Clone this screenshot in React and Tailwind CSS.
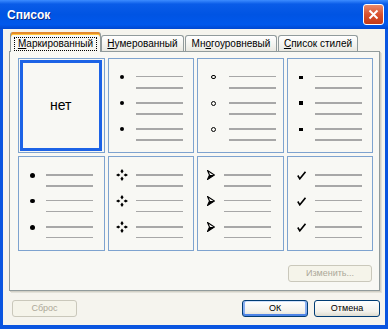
import React from "react";

const line = "bg-[#a7a7a7]";

function Lines({ thin = [] }) {
  return (
    <div className="flex w-[47px] flex-col gap-[9px]">
      <div className={`${line} ${thin[0] ? "h-[1px] mb-[1px]" : "h-[2px]"}`} />
      <div className={`${line} ${thin[1] ? "h-[1px] mb-[1px]" : "h-[2px]"}`} />
    </div>
  );
}

function Star() {
  return (
    <svg width="12" height="12" viewBox="0 0 12 12">
      <path d="M6 0 L7.6 2.3 L6 4.4 L4.4 2.3 Z M6 7.6 L7.6 9.7 L6 12 L4.4 9.7 Z M0 6 L2.3 4.4 L4.4 6 L2.3 7.6 Z M7.6 6 L9.7 4.4 L12 6 L9.7 7.6 Z" fill="#000" />
    </svg>
  );
}

function Arrow() {
  return (
    <svg width="8" height="10" viewBox="0 0 8 10">
      <path d="M0.5 0.5 L7.5 5 L0.5 9.5 L2.5 5 Z" fill="none" stroke="#000" strokeWidth="1.1" />
      <path d="M2.5 5 L7.5 5 L0.5 9.5 Z" fill="#000" />
    </svg>
  );
}

function Check() {
  return (
    <svg width="9" height="9" viewBox="0 0 9 9">
      <path d="M0.8 4.5 L2.8 7.8 L8.5 0.8" fill="none" stroke="#000" strokeWidth="1.6" />
    </svg>
  );
}

function Cell({ bullets, thin = [], offset = "w-[27px]" }) {
  return (
    <div className="h-[95px] border border-[#7ea3cf] bg-[#f8f8f4] pt-[17px]">
      <div className="flex flex-col gap-[13px]">
        {bullets.map((b, i) => (
          <div key={i} className="flex">
            <div className={`${offset} flex h-[2px] items-center justify-center`}>{b}</div>
            <Lines thin={thin[i] || []} />
          </div>
        ))}
      </div>
    </div>
  );
}

const dot = (s) => <div className={`${s} shrink-0 rounded-full bg-black`} />;
const ring = (s) => <div className={`${s} shrink-0 rounded-full border border-black`} />;
const sq = (s) => <div className={`${s} shrink-0 bg-black`} />;

function Tab({ w, children }) {
  return (
    <div
      className={`${w} flex h-[16px] items-center justify-center rounded-t-[3px] border-x border-t border-[#919b9c] bg-[linear-gradient(to_bottom,#ffffff,#f3f3ef_60%,#e9e8e1)] text-[10px] leading-none text-black`}
    >
      {children}
    </div>
  );
}

function Btn({ w, disabled, primary, children }) {
  return (
    <div
      className={`${w} flex h-[17px] items-center justify-center rounded-[3px] border text-[9px] leading-none ${
        disabled
          ? "border-[#cac8bb] bg-[#f5f4ea] text-[#aca899]"
          : "border-[#003c74] bg-[linear-gradient(to_bottom,#ffffff,#f2f1eb_70%,#dedcd0)] text-black"
      } ${
        primary
          ? "shadow-[inset_0_-2px_0_#4d84e6,inset_2px_0_0_#8ab0f2,inset_-2px_0_0_#8ab0f2,inset_0_1px_0_#cfe0fb]"
          : ""
      }`}
    >
      {children}
    </div>
  );
}

export default function App() {
  return (
    <div className="flex h-[329px] w-[388px] flex-col font-['Liberation_Sans',Arial,sans-serif]">
      <div className="flex h-[29px] shrink-0 items-center justify-between bg-[linear-gradient(to_bottom,#3d8cff_0%,#0a5ce8_14%,#0054e3_50%,#0058ec_85%,#0047d0_100%)] pl-[7px] pr-[4px]">
        <span className="text-[12px] font-bold text-white [text-shadow:1px_1px_0_#0b2e8c]">Список</span>
        <div className="flex h-[21px] w-[21px] items-center justify-center rounded-[3px] border border-white bg-[linear-gradient(to_bottom,#e98a6c,#d9512e_50%,#c33a18)]">
          <svg width="11" height="11" viewBox="0 0 11 11">
            <path d="M1.5 1.5 L9.5 9.5 M9.5 1.5 L1.5 9.5" stroke="#fff" strokeWidth="2" />
          </svg>
        </div>
      </div>

      <div className="flex flex-1 flex-col border-x-[3px] border-b-[4px] border-[#0a55e0] bg-[#f5f4ee] pl-[6px] pt-[3px]">
        <div className="relative z-10 flex h-[19px] items-end pl-[1px]">
          <div className="-mb-[1px] flex h-[20px] w-[91px] items-center justify-center rounded-t-[3px] border-x border-[#919b9c] bg-[#f8f8f4] pt-[3px] text-[10px] leading-none text-black shadow-[inset_0_2px_0_#e68b2c,inset_0_3px_0_#ffc73c]">
            <span className="border border-dotted border-black px-[3px] py-[1px]">
              <u>М</u>аркированный
            </span>
          </div>
          <Tab w="w-[83px]">
            <u>Н</u>умерованный
          </Tab>
          <div className="w-[1px]" />
          <Tab w="w-[92px]">
            Мн<u>о</u>гоуровневый
          </Tab>
          <div className="w-[1px]" />
          <Tab w="w-[80px]">
            <u>С</u>писок стилей
          </Tab>
        </div>

        <div className="flex h-[240px] w-[371px] flex-col border border-[#919b9c] bg-[#f8f8f4] pl-[8px] pt-[6px] shadow-[1px_1px_0_#d2d0c6,2px_2px_0_#e3e2da]">
          <div className="grid w-[355px] grid-cols-4 gap-x-[3px] gap-y-[3px]">
            <div className="h-[95px] border border-[#7ea3cf] bg-[#f8f8f4] p-[1px] pr-[2px]">
              <div className="flex h-full items-center justify-center border-[3px] border-[#1d63e6] text-[14px] text-black">
                нет
              </div>
            </div>
            <Cell bullets={[dot("h-[4px] w-[4px]"), dot("h-[4px] w-[4px]"), dot("h-[4px] w-[4px]")]} thin={[[true]]} />
            <Cell
              offset="w-[31px]"
              bullets={[ring("h-[4px] w-[5px]"), ring("h-[5px] w-[5px]"), ring("h-[5px] w-[5px]")]}
              thin={[[true]]}
            />
            <Cell
              bullets={[sq("h-[3px] w-[4px]"), sq("h-[4px] w-[4px]"), sq("h-[3px] w-[4px]")]}
              thin={[[true]]}
            />
            <Cell
              bullets={[dot("h-[5px] w-[5px]"), dot("h-[4px] w-[5px]"), dot("h-[5px] w-[5px]")]}
              thin={[[], [true, true], [false, true]]}
            />
            <Cell bullets={[<Star />, <Star />, <Star />]} thin={[[], [true, true], [false, true]]} />
            <Cell
              offset="w-[26px]"
              bullets={[<Arrow />, <Arrow />, <Arrow />]}
              thin={[[], [true, true], [false, true]]}
            />
            <Cell bullets={[<Check />, <Check />, <Check />]} thin={[[], [true, true], [false, true]]} />
          </div>
          <div className="mr-[7px] mt-[14px] self-end">
            <Btn w="w-[84px]" disabled>
              Изменить...
            </Btn>
          </div>
        </div>

        <div className="mt-[9px] flex w-[371px] items-center justify-between pl-[3px]">
          <Btn w="w-[65px]" disabled>
            Сброс
          </Btn>
          <div className="flex gap-[6px]">
            <Btn w="w-[66px]" primary>
              ОК
            </Btn>
            <Btn w="w-[66px]">Отмена</Btn>
          </div>
        </div>
      </div>
    </div>
  );
}
